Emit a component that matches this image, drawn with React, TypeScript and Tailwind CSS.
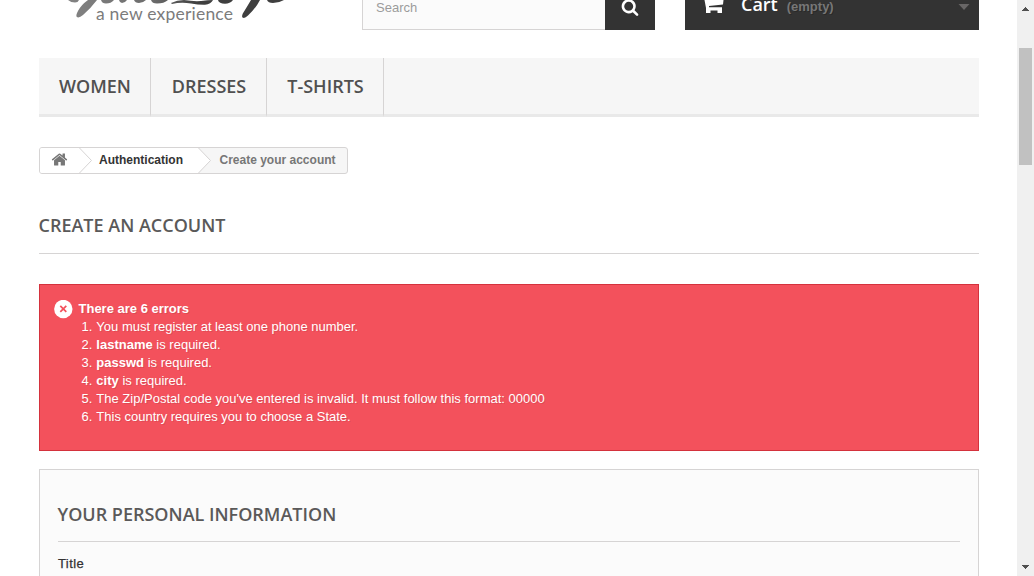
import React from "react";

const sans = "font-['Liberation_Sans',Arial,sans-serif]";
const open = "font-['Open_Sans',sans-serif]";

const navItems = [
  { label: "WOMEN", width: "w-[112px]" },
  { label: "DRESSES", width: "w-[116px]" },
  { label: "T-SHIRTS", width: "w-[117px]" },
];

const errors: { strong?: string; text: string }[] = [
  { text: "You must register at least one phone number." },
  { strong: "lastname", text: " is required." },
  { strong: "passwd", text: " is required." },
  { strong: "city", text: " is required." },
  { text: "The Zip/Postal code you've entered is invalid. It must follow this format: 00000" },
  { text: "This country requires you to choose a State." },
];

function Logo() {
  return (
    <svg className="block h-[30px] w-[260px] shrink-0" viewBox="39 0 260 30" aria-label="a new experience">
      <defs>
        <linearGradient id="ink" gradientUnits="userSpaceOnUse" x1="60" y1="0" x2="290" y2="0">
          <stop offset="0" stopColor="#858585" />
          <stop offset="0.4" stopColor="#6c6c6c" />
          <stop offset="0.6" stopColor="#3f3f3f" />
          <stop offset="1" stopColor="#3f3f3f" />
        </linearGradient>
      </defs>
      <g fill="url(#ink)">
        <path d="M68 0H79Q78 2.500 75 2.500Q71 2.500 68 0Z" />
        <path d="M88 0H97Q91 8 83 15Q79 18.500 76.800 17Q75.500 15.500 78 11Q81 5 88 0Z" />
        <path d="M101 0H114Q111 3.500 106 3.500Q102 3.500 101 0Z" />
        <path d="M119 0H127Q125 3 122 3Q119.500 2.500 119 0Z" />
        <path d="M134 0H146Q143 3 139 3Q135 3 134 0Z" />
        <path d="M151 0H168Q164 3.500 157 3.500Q152 3.500 151 0Z" />
        <path d="M171 3Q177 0 184 0Q193 1.500 201 1Q208 0 213 0Q211 4 205 4.800Q199 5 191 3.500Q181 1.700 172 4Z" />
        <path d="M218 0H233Q230 3.800 225 3.800Q219 3.800 218 0Z" />
        <path d="M251 0H260Q256 8 248 15.500Q244.500 19 242.500 17.500Q241 15.500 245 10Q248 5 251 0Z" />
        <path d="M267 0H284Q279 3 273 3Q268 3 267 0Z" />
      </g>
      <text x="96" y="20" textLength="137" fontFamily="Lato, sans-serif" fontSize="17.5" fill="#7c7c7c">
        a new experience
      </text>
    </svg>
  );
}

function SearchIcon() {
  return (
    <svg className="size-[18px] fill-white" viewBox="0 0 1792 1792">
      <path d="M1216 832q0-185-131.5-316.5t-316.5-131.5-316.5 131.5-131.5 316.5 131.5 316.5 316.5 131.5 316.5-131.5 131.5-316.5zm512 832q0 52-38 90t-90 38q-54 0-90-38l-343-342q-179 124-399 124-143 0-273.5-55.5t-225-150-150-225-55.5-273.5 55.5-273.5 150-225 225-150 273.5-55.5 273.5 55.5 225 150 150 225 55.5 273.5q0 220-124 399l343 343q37 37 37 90z" />
    </svg>
  );
}

function HomeIcon() {
  return (
    <svg className="size-[17px] fill-[#777777]" viewBox="0 0 1792 1792">
      <path d="M1472 992v480q0 26-19 45t-45 19h-384v-384h-256v384h-384q-26 0-45-19t-19-45v-480q0-1 .5-3t.5-3l575-474 575 474q1 2 1 6zm223-69l-62 74q-8 9-21 11h-3q-13 0-21-7l-692-577-692 577q-12 8-24 7-13-2-21-11l-62-74q-8-10-7-23.5t11-21.5l719-599q32-26 76-26t76 26l244 204v-195q0-14 9-23t23-9h192q14 0 23 9t9 23v408l219 182q10 8 11 21.5t-7 23.5z" />
    </svg>
  );
}

function Header() {
  return (
    <header className="flex h-[30px] overflow-hidden">
      <Logo />
      <div className="ml-[63px] flex h-[30px] w-[293px] shrink-0">
        <div className="flex w-[243px] border-b border-l border-[#d6d4d4] bg-[#fbfbfb] pl-[13px]">
          <span className={`${sans} text-[13px] leading-[15px] text-[#9c9b9b]`}>Search</span>
        </div>
        <div className="flex w-[50px] justify-center bg-[#333333]">
          <div className="-mt-[2px]">
            <SearchIcon />
          </div>
        </div>
      </div>
      <div className="ml-[30px] flex h-[30px] w-[294px] shrink-0 bg-[#333333]">
        <svg className="ml-[17px] h-[30px] w-[24px] shrink-0" viewBox="702 0 24 30" fill="#fff">
          <path d="M704.500 0H723.500L723 4.500L709 6V7.200H722V13H717.500V10.500H710.500V13H706V8Z" />
        </svg>
        <span className={`${open} -mt-[8px] ml-[15px] text-[18px] leading-[25px] font-semibold text-white`}>Cart</span>
        <span className={`${sans} -mt-[1px] ml-[9px] text-[13px] leading-[16px] font-bold text-[#777777] [text-shadow:1px_1px_rgba(0,0,0,0.2)]`}>(empty)</span>
        <svg className="mr-[9px] ml-auto h-[30px] w-[12px]" viewBox="0 0 12 30">
          <path d="M0.500 4H11.500L6 10Z" fill="#686666" />
        </svg>
      </div>
    </header>
  );
}

function Nav() {
  return (
    <nav className="mt-[28px] flex h-[59px] border-b-[3px] border-[#e9e9e9] bg-[#f6f6f6]">
      {navItems.map((item) => (
        <a
          key={item.label}
          className={`${item.width} ${open} -mb-[3px] flex h-[59px] items-center justify-center border-r border-b-[3px] border-r-[#d6d4d4] border-b-[#e9e9e9] pl-[1px] text-[18px] leading-[24px] font-semibold text-[#505050]`}
        >
          {item.label}
        </a>
      ))}
    </nav>
  );
}

function Breadcrumb() {
  return (
    <div className={`${sans} mt-[30px] flex h-[27px] w-[309px] overflow-hidden rounded-[3px] border border-[#d6d4d4] bg-[#f6f6f6] text-[12px] leading-[24px] font-bold`}>
      <div className="flex w-[39px] justify-center bg-white pt-[3px]">
        <HomeIcon />
      </div>
      <svg className="h-[25px] w-[13px] shrink-0 bg-white" viewBox="0 0 13 25">
        <path d="M0.500 0L12.500 12.500L0.500 25" fill="none" stroke="#d6d4d4" />
      </svg>
      <span className="w-[106px] bg-white pl-[7px] text-[#333333]">Authentication</span>
      <svg className="h-[25px] w-[13px] shrink-0" viewBox="0 0 13 25">
        <path d="M0 0H0.500L12.500 12.500L0.500 25H0Z" fill="#fff" />
        <path d="M0.500 0L12.500 12.500L0.500 25" fill="none" stroke="#d6d4d4" />
      </svg>
      <span className="pl-[8.5px] whitespace-nowrap text-[#777777]">Create your account</span>
    </div>
  );
}

function ErrorPanel() {
  return (
    <div className={`${sans} mt-[30px] flex h-[167px] border border-[#d4323d] bg-[#f3515c] pt-[15px] pl-[13.5px] text-[13px] leading-[18px] text-white [text-shadow:1px_1px_rgba(0,0,0,0.1)]`}>
      <svg className="mr-[6px] size-[19px] shrink-0" viewBox="0 0 19 19">
        <circle cx="9.300" cy="9" r="9.200" fill="#fff" />
        <path d="M6.300 5.800L12.300 11.800M12.300 5.800L6.300 11.800" stroke="#f3515c" strokeWidth="1.7" />
      </svg>
      <div>
        <p className="font-bold">There are 6 errors</p>
        <ol>
          {errors.map((error, i) => (
            <li key={i} className="flex">
              <span className="mr-[4px] ml-[3px]">{i + 1}.</span>
              <span className="whitespace-pre">
                {error.strong && <strong>{error.strong}</strong>}
                {error.text}
              </span>
            </li>
          ))}
        </ol>
      </div>
    </div>
  );
}

function Scrollbar() {
  return (
    <div className="flex h-[576px] w-[17px] shrink-0 flex-col items-center bg-[#f0f0f0]">
      <svg className="h-[48px] w-[17px] shrink-0" viewBox="0 0 17 48" shapeRendering="crispEdges">
        <path d="M5 11V10H6V9H7V8H8V7H9V8H10V9H11V10H12V11Z" fill="#505050" />
      </svg>
      <div className="h-[117px] w-[13px] bg-[#c1c1c1]" />
      <svg className="mt-auto h-[17px] w-[17px]" viewBox="0 0 17 17" shapeRendering="crispEdges">
        <path d="M5 6V7H6V8H7V9H8V10H9V9H10V8H11V7H12V6Z" fill="#505050" />
      </svg>
    </div>
  );
}

export default function App() {
  return (
    <div className="flex h-[576px] w-[1034px] overflow-hidden bg-white">
      <main className="h-[576px] w-[1017px] overflow-hidden pr-[38px] pl-[39px]">
        <Header />
        <Nav />
        <Breadcrumb />
        <h1 className={`${open} mt-[38px] h-[42px] border-b border-[#d6d4d4] text-[18px] leading-[27px] font-semibold text-[#5a5959]`}>
          <span className="-ml-[0.5px]">CREATE AN ACCOUNT</span>
        </h1>
        <ErrorPanel />
        <section className="mt-[18px] h-[200px] border border-[#d6d4d4] bg-[#fbfbfb] px-[18px] pt-[31px]">
          <h3 className={`${open} h-[41px] border-b border-[#d6d4d4] text-[18px] leading-[27px] font-semibold text-[#5a5959]`}>
            <span className="-ml-[0.5px]">YOUR PERSONAL INFORMATION</span>
          </h3>
          <p className={`${sans} mt-[13px] text-[13px] leading-[18px] tracking-[0.4px] text-[#333333] [-webkit-text-stroke:0.25px_#333333]`}>Title</p>
        </section>
      </main>
      <Scrollbar />
    </div>
  );
}
